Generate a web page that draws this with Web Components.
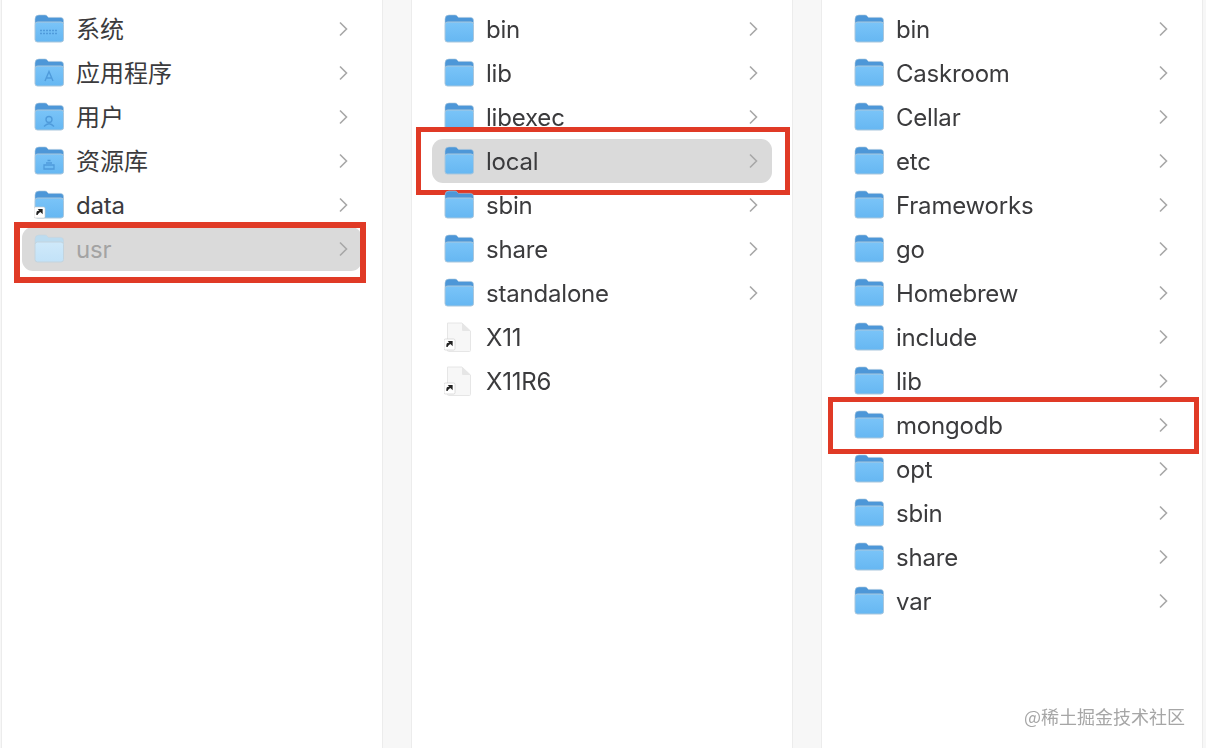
<!DOCTYPE html>
<html>
<head>
<meta charset="utf-8">
<style>
    html, body { margin: 0; height: 100%; background: #f7f7f7; }
</style>
</head>
<body>
<finder-browser>
    <finder-column>
        <finder-row icon="system" cjk>系统</finder-row>
        <finder-row icon="apps" cjk>应用程序</finder-row>
        <finder-row icon="users" cjk>用户</finder-row>
        <finder-row icon="library" cjk>资源库</finder-row>
        <finder-row icon="alias-folder">data</finder-row>
        <finder-row icon="faded" selected="dim" marked="usr">usr</finder-row>
    </finder-column>
    <finder-column>
        <finder-row>bin</finder-row>
        <finder-row>lib</finder-row>
        <finder-row>libexec</finder-row>
        <finder-row selected="on" marked="local">local</finder-row>
        <finder-row>sbin</finder-row>
        <finder-row>share</finder-row>
        <finder-row>standalone</finder-row>
        <finder-row icon="alias-file" plain>X11</finder-row>
        <finder-row icon="alias-file" plain>X11R6</finder-row>
    </finder-column>
    <finder-column>
        <finder-row>bin</finder-row>
        <finder-row>Caskroom</finder-row>
        <finder-row>Cellar</finder-row>
        <finder-row>etc</finder-row>
        <finder-row>Frameworks</finder-row>
        <finder-row>go</finder-row>
        <finder-row>Homebrew</finder-row>
        <finder-row>include</finder-row>
        <finder-row>lib</finder-row>
        <finder-row marked="mongodb">mongodb</finder-row>
        <finder-row>opt</finder-row>
        <finder-row>sbin</finder-row>
        <finder-row>share</finder-row>
        <finder-row>var</finder-row>
    </finder-column>
</finder-browser>
<script>
const aliasBadge = `
    <rect x="0" y="17" width="11" height="11" rx="1.5" fill="#fff" stroke="#c9c9c9" stroke-width=".6"/>
    <path d="M3 25 L3 23 Q3 21.5 4.5 21.5 L6.5 21.5 M5.2 19.6 L8 19.6 L8 22.6 Z" fill="#222" stroke="#222" stroke-width="1.3"/>`;

const folderBody = (top, from, to, edge) => `
    <defs><linearGradient id="g" x1="0" y1="0" x2="0" y2="1">
        <stop offset="0" stop-color="${from}"/><stop offset="1" stop-color="${to}"/>
    </linearGradient></defs>
    <path d="M1 5 Q1 1 5 1 L11 1 Q12.5 1 13.5 2.4 L14.5 3.4 L26.5 3.4 Q29.5 3.4 29.5 6.5 L29.5 10 L1 10 Z" fill="${top}" stroke="${edge}" stroke-width=".6"/>
    <rect x="1" y="8" width="28.5" height="20" rx="2.5" fill="url(#g)" stroke="${edge}" stroke-width="1"/>`;

const normal = folderBody("#4d97d8", "#7ac4f8", "#66b7f2", "#a9c6dc");

const icons = {
    folder: normal,
    faded: folderBody("#bcdcf0", "#cfe9fa", "#c2e2f8", "#c4d4de"),
    system: normal + `<path d="M6 16.5 H24 M6 19.5 H24" stroke="#4f9bdb" stroke-width="1.4" stroke-dasharray="2 1"/>`,
    apps: normal + `<path d="M11 23 L15 13.5 L19 23 M12.5 20 H17.5" fill="none" stroke="#4f9bdb" stroke-width="1.4"/>`,
    users: normal + `<circle cx="15" cy="17.5" r="3" fill="none" stroke="#4f9bdb" stroke-width="1.4"/><path d="M10 24.5 Q15 19 20 24.5" fill="none" stroke="#4f9bdb" stroke-width="1.4"/>`,
    library: normal + `<path d="M10 23 H20 V19 H10 Z M12 17 H18 M13.5 14.5 H16.5" fill="none" stroke="#4f9bdb" stroke-width="1.3"/>`,
    "alias-folder": normal + aliasBadge,
    "alias-file": `
        <path d="M3.5 1 H18 L26.5 9 V28.5 Q26.5 29.5 25.5 29.5 H4.5 Q3.5 29.5 3.5 28.5 Z" fill="#f7f7f7" stroke="#e6e6e6"/>
        <path d="M18 1 V8 Q18 9 19 9 H26.5 Z" fill="#e6e6e6"/>` + aliasBadge,
};

class FinderBrowser extends HTMLElement {
    constructor() {
        super();
        const shadow = this.attachShadow({ mode: "open" });
        shadow.innerHTML = `
            <style>
                :host {
                    display: block;
                    position: relative;
                    width: 1206px;
                    height: 748px;
                    overflow: hidden;
                    background: #f7f7f7;
                    font-family: Inter, "Noto Sans CJK SC", sans-serif;
                }
                .columns {
                    display: grid;
                    grid-template-columns: repeat(3, 382px);
                    gap: 28px;
                    height: 100%;
                    padding-left: 1px;
                    filter: blur(0.6px);
                }
                .mark {
                    position: absolute;
                    right: 21px;
                    top: 704px;
                    font-size: 18px;
                    line-height: 24px;
                    color: #a6a6a6;
                    font-family: "Noto Sans CJK SC", sans-serif;
                    filter: blur(0.4px);
                }
            </style>
            <div class="columns"><slot></slot></div>
            <div class="mark">@稀土掘金技术社区</div>
        `;
    }
}

class FinderColumn extends HTMLElement {
    constructor() {
        super();
        const shadow = this.attachShadow({ mode: "open" });
        shadow.innerHTML = `
            <style>
                :host {
                    display: flex;
                    flex-direction: column;
                    padding-top: 7px;
                    background: #fff;
                    border-left: 1px solid #ececec;
                    border-right: 1px solid #ececec;
                    box-sizing: border-box;
                }
            </style>
            <slot></slot>
        `;
    }
}

class FinderRow extends HTMLElement {
    constructor() {
        super();
        const shadow = this.attachShadow({ mode: "open" });
        const icon = icons[this.getAttribute("icon") || "folder"];
        const marked = this.getAttribute("marked");
        // red frames sit a bit differently per column, they were drawn by hand
        const frames = {
            usr: "left:-8px;right:-4px;top:-5px;bottom:-12px;border-width:6px",
            local: "left:-16px;right:-18px;top:-12px;bottom:-12px;border-width:5px",
            mongodb: "left:-14px;right:-17px;top:-6px;bottom:-7px;border-width:5px",
        };
        shadow.innerHTML = `
            <style>
                :host {
                    display: flex;
                    align-items: center;
                    position: relative;
                    flex: none;
                    height: 44px;
                    margin: 0 20px;
                    padding: 0 14px 0 12px;
                    border-radius: 11px;
                    color: #3b3b3d;
                    font-size: 24px;
                    letter-spacing: -0.2px;
                }
                :host([selected]) { background: #dadada; }
                :host([selected="dim"]) { color: #a3a3a3; }
                :host([cjk]) .name { padding-bottom: 4px; letter-spacing: 0; }
                svg.icon { width: 30px; height: 30px; flex: none; margin-right: 12px; }
                .name { flex: 1; white-space: nowrap; }
                svg.chev { width: 10px; height: 16px; flex: none; }
                .frame {
                    position: absolute;
                    border: 5px solid #e03a26;
                    pointer-events: none;
                }
            </style>
            <svg class="icon" viewBox="0 0 30 30">${icon}</svg>
            <span class="name"><slot></slot></span>
            ${this.hasAttribute("plain") ? "" : `<svg class="chev" viewBox="0 0 10 16"><path d="M2 1.5 L8.5 8 L2 14.5" fill="none" stroke="#a8a8a8" stroke-width="1.6"/></svg>`}
            ${marked ? `<div class="frame" style="${frames[marked]}"></div>` : ""}
        `;
    }
}

customElements.define("finder-browser", FinderBrowser);
customElements.define("finder-column", FinderColumn);
customElements.define("finder-row", FinderRow);
</script>
</body>
</html>
